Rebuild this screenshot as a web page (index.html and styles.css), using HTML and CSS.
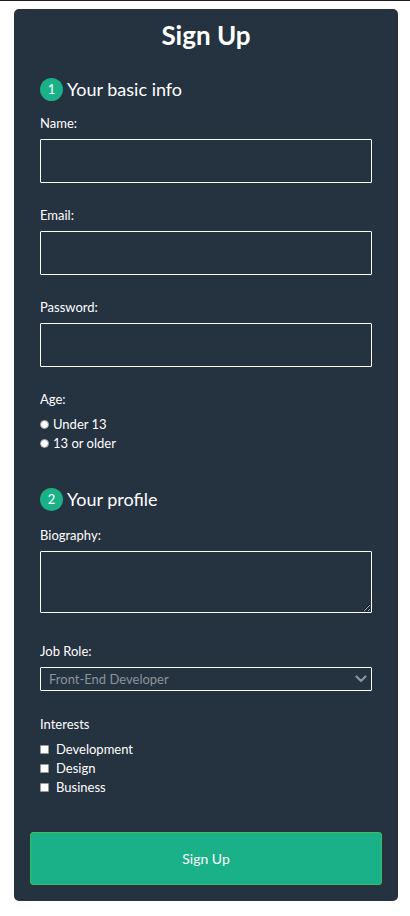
FILE: index.html
```html
<!DOCTYPE html>
<html lang="en">
<head>
<meta charset="utf-8">
<title>Sign Up</title>
<link rel="stylesheet" href="styles.css">
</head>
<body>
<div class="topline"></div>
<div class="card">
  <h1 class="title">Sign Up</h1>
  <form class="form">
    <fieldset class="group">
      <h2 class="step"><span class="num">1</span>Your basic info</h2>
      <label class="lbl first">Name:</label>
      <input class="field" type="text">
      <label class="lbl">Email:</label>
      <input class="field" type="email">
      <label class="lbl">Password:</label>
      <input class="field" type="password">
      <label class="lbl">Age:</label>
      <div class="choices radios">
        <label class="opt"><input class="radio" type="radio" name="age">Under 13</label>
        <label class="opt"><input class="radio" type="radio" name="age">13 or older</label>
      </div>
    </fieldset>
    <fieldset class="group second">
      <h2 class="step"><span class="num">2</span>Your profile</h2>
      <label class="lbl first2">Biography:</label>
      <textarea class="field area"></textarea>
      <label class="lbl job">Job Role:</label>
      <div class="selwrap">
        <select class="field sel"><option>Front-End Developer</option></select>
        <svg class="chev" width="12" height="8" viewBox="0 0 12 8"><path d="M1.5 1.5 L6 6 L10.5 1.5" fill="none" stroke="#8b949d" stroke-width="2.2" stroke-linecap="round" stroke-linejoin="round"/></svg>
      </div>
      <label class="lbl int">Interests</label>
      <div class="choices checks">
        <label class="opt"><input class="check" type="checkbox">Development</label>
        <label class="opt"><input class="check" type="checkbox">Design</label>
        <label class="opt"><input class="check" type="checkbox">Business</label>
      </div>
    </fieldset>
    <button class="btn" type="button">Sign Up</button>
  </form>
</div>
</body>
</html>
```
FILE: styles.css
```css
html, body {
  margin: 0;
  padding: 0;
  background: #ffffff;
}
body {
  font-family: Lato, "Noto Sans", sans-serif;
  color: #ffffff;
}
.topline {
  height: 1px;
  background: #1e1e1e;
}
.card {
  margin: 8px 12px 0 14px;
  width: 384px;
  box-sizing: border-box;
  height: 892px;
  background: #253240;
  border-radius: 5px;
  padding: 10px 16px 16px;
}
.title {
  margin: 0;
  text-align: center;
  font-size: 26px;
  font-weight: 700;
  line-height: 32px;
}
.form {
  margin: 0;
  padding: 0;
}
.group {
  border: none;
  margin: 26px 0 0;
  padding: 0 10px;
  min-width: 0;
}
.group.second {
  margin-top: 34px;
}
.step {
  margin: 0;
  display: flex;
  align-items: center;
  gap: 4px;
  font-size: 18px;
  font-weight: 400;
  line-height: 24px;
}
.num {
  width: 23px;
  height: 23px;
  border-radius: 50%;
  background: #1ab188;
  color: #fff;
  font-size: 13px;
  display: flex;
  align-items: center;
  justify-content: center;
}
.lbl {
  display: block;
  font-size: 13px;
  line-height: 18px;
  margin: 23px 0 7px;
}
.lbl.first {
  margin-top: 13px;
}
.lbl.first2 {
  margin-top: 15px;
}
.lbl.job {
  margin-top: 29px;
}
.lbl.int {
  margin-top: 24px;
  margin-bottom: 7px;
}
.field {
  display: block;
  box-sizing: border-box;
  width: 332px;
  height: 44px;
  margin: 0;
  background: transparent;
  border: 1px solid #ffffff;
  border-radius: 1px;
  color: #fff;
  font-family: inherit;
  font-size: 13px;
  outline: none;
}
.area {
  height: 62px;
  resize: vertical;
}
.selwrap {
  position: relative;
  width: 332px;
}
.sel {
  height: 24px;
  appearance: none;
  -webkit-appearance: none;
  padding: 0 8px;
  color: #8b939c;
  font-size: 13px;
}
.sel option {
  color: #000;
}
.chev {
  position: absolute;
  right: 5px;
  top: 8px;
}
.choices {
  display: flex;
  flex-direction: column;
}
.opt {
  display: flex;
  align-items: center;
  font-size: 13px;
  line-height: 19px;
}
.radio, .check {
  appearance: none;
  -webkit-appearance: none;
  margin: 0;
  width: 9px;
  height: 9px;
  background: #ffffff;
  border: 1px solid #9a9a9a;
  box-sizing: border-box;
}
.radio {
  border-radius: 50%;
  margin-right: 4px;
}
.check {
  border-radius: 1px;
  margin-right: 7px;
}
.btn {
  display: block;
  margin-top: 35px;
  width: 352px;
  height: 53px;
  background: #1ab188;
  border: 1px solid #3bbf62;
  border-radius: 3px;
  color: #ffffff;
  font-family: inherit;
  font-size: 14px;
}
```
